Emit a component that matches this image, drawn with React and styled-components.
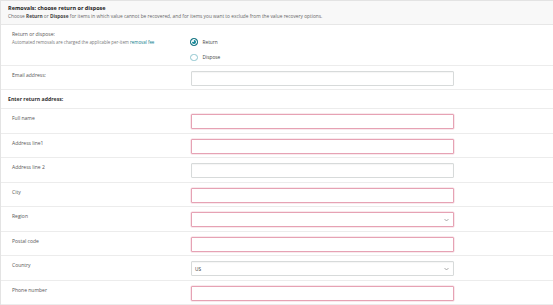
import React from 'react';
import styled, { createGlobalStyle } from 'styled-components';

const GlobalStyle = createGlobalStyle`
  body {
    margin: 0;
    background: #ffffff;
    font-family: "Open Sans", "Liberation Sans", sans-serif;
    color: #333;
    overflow: hidden;
  }
`;

const Panel = styled.div`
  border-left: 1px solid #e3e3e3;
  border-top: 1px solid #e3e3e3;
`;

const Header = styled.div`
  height: 24px;
  padding: 3px 0 0 7px;
  box-sizing: border-box;
  background: #f8f8f8;
  border-bottom: 1px solid #e7e7e7;
`;

const Title = styled.div`
  font-size: 5.5px;
  font-weight: 700;
  color: #222;
  line-height: 8px;
`;

const Subtitle = styled.div`
  font-size: 4.8px;
  color: #666;
  line-height: 8px;

  b {
    font-weight: 700;
    color: #444;
  }
`;

const Row = styled.div`
  display: flex;
  height: ${p => p.$h || 24.5}px;
  box-sizing: border-box;
  padding-left: 11px;
  border-bottom: 1px solid #ececec;
`;

const LabelCol = styled.div`
  width: 179px;
  flex-shrink: 0;
  padding-top: ${p => p.$top || 5}px;
`;

const Label = styled.div`
  font-size: 5px;
  color: #555;
  line-height: 8px;
`;

const Hint = styled.div`
  font-size: 4.4px;
  color: #777;
  line-height: 8px;

  a {
    color: #0a7b8a;
    text-decoration: none;
  }
`;

const Heading = styled.div`
  padding: 5px 0 0 7px;
  height: 19px;
  box-sizing: border-box;
  border-bottom: 1px solid #ececec;
  font-size: 5.2px;
  font-weight: 700;
  color: #333;
  line-height: 8px;
`;

const Field = styled.div`
  position: relative;
  width: 263px;
  height: 15px;
  margin-top: 5px;
  box-sizing: border-box;
  border: 1px solid ${p => (p.$error ? '#e6a2b4' : '#d7dada')};
  border-radius: 1px;
  box-shadow: ${p => (p.$error ? '0 0 0 0.5px #f4d3dc' : 'inset 0 1px 1px rgba(0,0,0,0.04)')};
  background: #fff;
  display: flex;
  align-items: center;
  padding-left: 3px;
  font-size: 4.8px;
  color: #333;
`;

const Chevron = styled.svg`
  position: absolute;
  right: 4px;
  top: 5px;
`;

const Radios = styled.div`
  display: flex;
  flex-direction: column;
  gap: 8px;
  padding-top: 13px;
`;

const RadioItem = styled.div`
  display: flex;
  align-items: center;
  gap: 5px;
  font-size: 4.8px;
  color: #444;
  margin-left: -1px;
`;

const RadioDot = styled.span`
  width: 7.5px;
  height: 7.5px;
  box-sizing: border-box;
  border-radius: 50%;
  border: ${p => (p.$on ? '1.6px solid #0b6b79' : '0.8px solid #8fc6cf')};
  background: ${p => (p.$on ? '#1b8c9c' : '#fff')};
  box-shadow: ${p => (p.$on ? 'inset 0 0 0 1px #fff' : 'none')};
  position: relative;

  &::after {
    content: '';
    display: ${p => (p.$on ? 'block' : 'none')};
    position: absolute;
    left: 1.35px;
    top: 1.35px;
    width: 1.6px;
    height: 1.6px;
    border-radius: 50%;
    background: #fff;
  }
`;

const Select = ({ error, value }) => (
  <Field $error={error}>
    {value}
    <Chevron width="5" height="4" viewBox="0 0 10 8">
      <path d="M1 2 L5 6 L9 2" fill="none" stroke="#888" strokeWidth="1.4" />
    </Chevron>
  </Field>
);

const fields = [
  { label: 'Full name', error: true },
  { label: 'Address line1', error: true },
  { label: 'Address line 2' },
  { label: 'City', error: true },
  { label: 'Region', error: true, select: true },
  { label: 'Postal code', error: true },
  { label: 'Country', select: true, value: 'US' },
  { label: 'Phone number', error: true },
];

export default function App() {
  return (
    <Panel>
      <GlobalStyle />
      <Header>
        <Title>Removals: choose return or dispose</Title>
        <Subtitle>
          Choose <b>Return</b> or <b>Dispose</b> for items in which value cannot be recovered, and for items you want to exclude from the value recovery options.
        </Subtitle>
      </Header>
      <Row $h={41}>
        <LabelCol $top={5}>
          <Label>Return or dispose:</Label>
          <Hint>
            Automated removals are charged the applicable per-item <a href="#">removal fee</a>
          </Hint>
        </LabelCol>
        <Radios>
          <RadioItem><RadioDot $on />Return</RadioItem>
          <RadioItem><RadioDot />Dispose</RadioItem>
        </Radios>
      </Row>
      <Row $h={24}>
        <LabelCol $top={5}>
          <Label>Email address:</Label>
        </LabelCol>
        <Field />
      </Row>
      <Heading>Enter return address:</Heading>
      {fields.map(f => (
        <Row key={f.label}>
          <LabelCol>
            <Label>{f.label}</Label>
          </LabelCol>
          {f.select ? <Select error={f.error} value={f.value} /> : <Field $error={f.error} />}
        </Row>
      ))}
    </Panel>
  );
}
